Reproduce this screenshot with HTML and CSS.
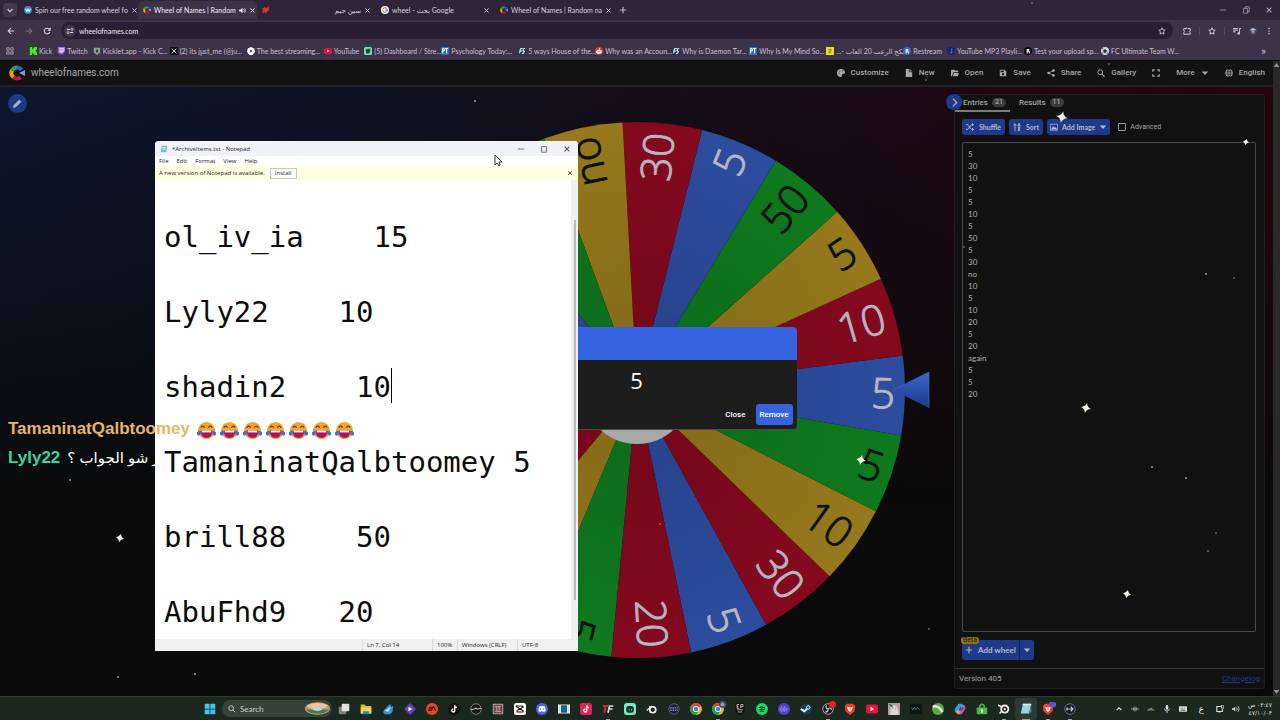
FILE: index.html
```
<!DOCTYPE html>
<html lang="en">
<head>
    <meta charset="UTF-8">
    <meta name="viewport" content="width=device-width, initial-scale=1.0">
    <title>Wheel of Names | Random name picker</title>
    <link rel="stylesheet" href="styles.css">
</head>
<body>
    <svg class="defs" aria-hidden="true">
        <symbol id="i-close" viewBox="0 0 10 10"><path d="M2 2l6 6M8 2l-6 6" stroke="currentColor" stroke-width="1.3" fill="none"/></symbol>
        <symbol id="i-wheel" viewBox="0 0 16 16">
            <path d="M8 2.5A5.5 5.5 0 0 0 3 5.5" stroke="#2fa043" stroke-width="4" fill="none"/>
            <path d="M3 5.5A5.5 5.5 0 0 0 4.500 12.300" stroke="#d9a91c" stroke-width="4" fill="none"/>
            <path d="M4.500 12.300A5.500 5.500 0 0 0 11.500 12.200" stroke="#c81536" stroke-width="4" fill="none"/>
            <path d="M8 2.500A5.500 5.500 0 0 1 12.500 5" stroke="#3560c8" stroke-width="4" fill="none"/>
            <path d="M10 8l6-3v6z" fill="#7d9ad8"/>
        </symbol>
        <symbol id="i-caret" viewBox="0 0 10 10"><path d="M1 3h8L5 7.500z" fill="currentColor"/></symbol>
        <symbol id="i-chrome" viewBox="0 0 16 16">
            <circle cx="8" cy="8" r="8" fill="#e0b82e"/>
            <path d="M8 8L1.100 4A8 8 0 0 1 14.900 4z" fill="#dc4437"/>
            <path d="M8 8L1.100 4A8 8 0 0 0 8 16l4-7z" fill="#229a52"/>
            <circle cx="8" cy="8" r="4" fill="#fff"/><circle cx="8" cy="8" r="3" fill="#3b7ded"/>
        </symbol>
        <symbol id="i-brave" viewBox="0 0 16 16">
            <path d="M4 1h8l3 3-1 7-6 5-6-5-1-7z" fill="#ef4023"/>
            <path d="M4 5l3 1h2l3-1-2 5-2 2-2-2z" fill="#fff"/><path d="M7 7h2l-1 3z" fill="#ef4023"/>
        </symbol>
        <symbol id="i-tiktok" viewBox="0 0 16 16"><path d="M9 3v7a2 2 0 1 1-2-2M9 3c0 2 1.500 3 3 3" stroke="#fff" stroke-width="1.800" fill="none"/></symbol>
        <symbol id="i-pt" viewBox="0 0 10 10"><rect width="10" height="10" fill="#2f6fc0"/><path d="M2 8V2h2v3H2M5 2h4M7 2v6" stroke="#fff" stroke-width="1.200" fill="none"/></symbol>
        <symbol id="i-fs" viewBox="0 0 10 10"><path d="M0 0h10v10H0z" fill="#25394f"/><path d="M2 8l1-6h3M2 5h3M9 2H7L6 5h2L7 8H5" stroke="#fff" stroke-width="1.200" fill="none"/></symbol>
        <symbol id="i-joy" viewBox="0 0 20 20">
            <circle cx="10" cy="10" r="9" fill="#f4a62c"/>
            <path d="M4 7q2-3 4 0M12 7q2-3 4 0" stroke="#5c3516" stroke-width="1.300" fill="none"/>
            <path d="M4 10h12q0 8-6 8t-6-8z" fill="#a81562"/><path d="M5 10h10v2H5z" fill="#fff"/>
            <path d="M4 10q-5 1-4 4t4 0zM16 10q5 1 4 4t-4 0z" fill="#4468d8"/>
        </symbol>
    </svg>

    <div class="browser">
        <div class="tab-strip">
            <button class="tab-search" aria-label="Search tabs"><svg viewBox="0 0 10 10"><path d="M2 4l3 3 3-3" stroke="currentColor" stroke-width="1.500" fill="none"/></svg></button>
            <div class="tab">
                <svg class="fav" viewBox="0 0 10 10"><circle cx="5" cy="5" r="5" fill="#3684d8"/><path d="M2 3.500l1.500 3.500L5 4l1.500 3L8 3.500" stroke="#fff" stroke-width="1.300" fill="none"/></svg>
                <span class="tab-title">Spin our free random wheel fo</span>
                <button class="tab-x" aria-label="Close tab"><svg><use href="#i-close"/></svg></button>
            </div>
            <div class="tab active">
                <svg class="fav"><use href="#i-wheel"/></svg>
                <span class="tab-title">Wheel of Names | Random</span>
                <svg class="sound" viewBox="0 0 10 10"><path d="M0 4h2l3-3v8L2 6H0z" fill="currentColor"/><path d="M6.500 3q2 2 0 4M8 1.500q3 3.500 0 7" stroke="currentColor" fill="none"/></svg>
                <button class="tab-x" aria-label="Close tab"><svg><use href="#i-close"/></svg></button>
            </div>
            <div class="tab">
                <svg class="fav" viewBox="0 0 10 10"><path d="M0 3l3-1 1-1 1 2 4-3-1 3 2-1-2 3 1 1-3 1-1 3-2-3-2 3V6L0 8l1-3z" fill="#cf3a2c"/></svg>
                <span class="tab-title" dir="rtl">سين جيم</span>
                <button class="tab-x" aria-label="Close tab"><svg><use href="#i-close"/></svg></button>
            </div>
            <div class="tab">
                <svg class="fav" viewBox="0 0 10 10"><circle cx="5" cy="5" r="5" fill="#fff"/><path d="M7 3A3 3 0 0 0 2.500 3.500" stroke="#e33" stroke-width="1.300" fill="none"/><path d="M2.500 3.500v3" stroke="#ea0" stroke-width="1.300"/><path d="M2.500 6.500A3 3 0 0 0 7 7" stroke="#2a4" stroke-width="1.300" fill="none"/><path d="M5 5h3L7 7" stroke="#47e" stroke-width="1.300" fill="none"/></svg>
                <span class="tab-title">wheel - بحث Google</span>
                <button class="tab-x" aria-label="Close tab"><svg><use href="#i-close"/></svg></button>
            </div>
            <div class="tab">
                <svg class="fav"><use href="#i-wheel"/></svg>
                <span class="tab-title">Wheel of Names | Random na</span>
                <button class="tab-x" aria-label="Close tab"><svg><use href="#i-close"/></svg></button>
            </div>
            <button class="new-tab" aria-label="New tab"><svg viewBox="0 0 10 10"><path d="M5 1v8M1 5h8" stroke="currentColor" stroke-width="1.400"/></svg></button>
            <div class="win-buttons">
                <button aria-label="Minimize"><svg viewBox="0 0 10 10"><path d="M1 5h8" stroke="currentColor"/></svg></button>
                <button aria-label="Restore"><svg viewBox="0 0 10 10"><path d="M2 3h5v6H2zM4 3V1h5v6H7" stroke="currentColor" fill="none"/></svg></button>
                <button aria-label="Close"><svg><use href="#i-close"/></svg></button>
            </div>
        </div>

        <div class="toolbar">
            <button aria-label="Back"><svg viewBox="0 0 10 10"><path d="M9 5H1.500M5 1.500L1.500 5 5 8.500" stroke="currentColor" stroke-width="1.300" fill="none"/></svg></button>
            <button class="off" aria-label="Forward"><svg viewBox="0 0 10 10"><path d="M1 5h7.500M5 1.500L8.500 5 5 8.500" stroke="currentColor" stroke-width="1.300" fill="none"/></svg></button>
            <button aria-label="Reload"><svg viewBox="0 0 10 10"><path d="M8.500 6A3.500 3.500 0 1 1 7.500 2.500L9 4M9 1v3H6" stroke="currentColor" stroke-width="1.300" fill="none"/></svg></button>
            <div class="address">
                <span class="site-info"><svg viewBox="0 0 10 10"><path d="M1 3h4M5 7h4" stroke="currentColor" stroke-width="1.300"/><circle cx="7.500" cy="3" r="1.300" stroke="currentColor" fill="none"/><circle cx="2.500" cy="7" r="1.300" stroke="currentColor" fill="none"/></svg></span>
                <input type="text" value="wheelofnames.com" aria-label="Address">
                <svg viewBox="0 0 10 10"><path d="M5 1l1.200 2.700 2.800.3-2.100 2 .6 3L5 7.500 2.500 9l.6-3L1 4l2.800-.3z" stroke="currentColor" fill="none"/></svg>
            </div>
            <div class="ext">
                <svg viewBox="0 0 10 10"><path d="M1 2h3q1-2 2 0h3v3q-2 1 0 2v2H1V7q2-1 0-2z" stroke="currentColor" stroke-width="1.200" fill="none"/></svg>
                <i></i>
                <svg viewBox="0 0 10 10"><path d="M5 1l1.200 2.700 2.800.3-2.100 2 .6 3L5 7.500 2.500 9l.6-3L1 4l2.800-.3z" stroke="currentColor" stroke-width="1.200" fill="none"/></svg>
                <i></i>
                <svg viewBox="0 0 10 10"><path d="M0 2h6M0 4h6M0 6h3M8 8V2h2" stroke="currentColor" stroke-width="1.200" fill="none"/><circle cx="7" cy="8" r="1.500" fill="currentColor"/></svg>
                <svg viewBox="0 0 10 10"><circle cx="5" cy="5" r="5" fill="#36466d"/><path d="M1 4q4-5 8 0z" fill="#c7c2cf"/><circle cx="5" cy="5.500" r="2" fill="#c09080"/><path d="M2 9q3-3 6 0z" fill="#ab3540"/></svg>
                <svg viewBox="0 0 10 10"><path d="M5 1v1.500M5 4.300v1.500M5 7.500V9" stroke="currentColor" stroke-width="1.500"/></svg>
            </div>
        </div>

        <div class="bookmarks">
            <svg class="apps" viewBox="0 0 10 10"><path d="M1 1h3v3H1zM6 1h3v3H6zM1 6h3v3H1zM6 6h3v3H6z" stroke="currentColor" stroke-width="1.200" fill="none"/></svg>
            <a href="#"><svg viewBox="0 0 10 10"><path d="M1 0h3v3l3-3h3v3L8 5l2 2v3H7L4 7v3H1z" fill="#3ff01d"/></svg><span>Kick</span></a>
            <a href="#"><svg viewBox="0 0 10 10"><path d="M1 0h9v6L7 9H5L4 10V8H1z" fill="#9b5ce8"/><path d="M3 1h6v4L7 7H3z" fill="#e9dcf8"/><path d="M5 2v3M7.500 2v3" stroke="#9b5ce8"/></svg><span>Twitch</span></a>
            <a href="#" class="wide"><svg viewBox="0 0 10 10"><path d="M1 1h8v6L5 10 1 7z" fill="#8da093"/><path d="M4 3h2v4H4z" fill="#222"/></svg><span>Kicklet.app - Kick C...</span></a>
            <a href="#" class="wide"><svg viewBox="0 0 10 10"><path d="M0 0h10v10H0z" fill="#111"/><path d="M2 2l6 6M8 2L2 8" stroke="#ddd" stroke-width="1.200"/></svg><span>(2) its just_me (@ju...</span></a>
            <a href="#" class="wide"><svg viewBox="0 0 10 10"><path d="M5 0l4 2 1 4-3 4H3L0 6l1-4z" fill="#fff"/><path d="M4 3l3 2-3 2z" fill="#333"/></svg><span>The best streaming...</span></a>
            <a href="#"><svg viewBox="0 0 10 10"><rect y="1" width="10" height="8" rx="2" fill="#e01237"/><path d="M4 3l3 2-3 2z" fill="#fff"/></svg><span>YouTube</span></a>
            <a href="#" class="wide"><svg viewBox="0 0 10 10"><rect width="10" height="10" rx="2" fill="#6de0b6"/><path d="M2 3l6-1v3L6 8H3z" fill="#154438"/></svg><span>(5) Dashboard / Stre...</span></a>
            <a href="#" class="wide"><svg><use href="#i-pt"/></svg><span>Psychology Today:...</span></a>
            <a href="#" class="wide"><svg><use href="#i-fs"/></svg><span>5 ways House of the...</span></a>
            <a href="#" class="wide"><svg viewBox="0 0 10 10"><circle cx="5" cy="5" r="5" fill="#d93a28"/><ellipse cx="5" cy="6" rx="3.500" ry="2.500" fill="#fff"/><path d="M5 4l1-3" stroke="#fff"/><circle cx="3.800" cy="5.500" r=".7" fill="#d93a28"/><circle cx="6.200" cy="5.500" r=".7" fill="#d93a28"/></svg><span>Why was an Accoun...</span></a>
            <a href="#" class="wide"><svg><use href="#i-fs"/></svg><span>Why is Daemon Tar...</span></a>
            <a href="#" class="wide"><svg><use href="#i-pt"/></svg><span>Why Is My Mind So...</span></a>
            <a href="#" class="wide"><svg viewBox="0 0 10 10"><path d="M0 0h10v10H0z" fill="#e8e020"/><path d="M3 3h4M3 5h4M3 7h3" stroke="#6a6515"/></svg><span dir="rtl">بكج الرعب 20 العاب -...</span></a>
            <a href="#"><svg viewBox="0 0 10 10"><circle cx="5" cy="5" r="5" fill="#2e6be0"/><path d="M4 8V3h2v2H4M6 5l1 3" stroke="#fff" stroke-width="1.300" fill="none"/></svg><span>Restream</span></a>
            <a href="#" class="wide"><svg viewBox="0 0 10 10"><circle cx="5" cy="5" r="5" fill="#221d75"/><path d="M6 2v5q-1 1-2 0" stroke="#6b6be8" stroke-width="1.300" fill="none"/></svg><span>YouTube MP3 Playli...</span></a>
            <a href="#" class="wide"><svg viewBox="0 0 10 10"><circle cx="5" cy="5" r="5" fill="#0c0c0f"/><path d="M4 8V3h2v2H4M6 5l1 3" stroke="#fff" stroke-width="1.300" fill="none"/></svg><span>Test your upload sp...</span></a>
            <a href="#" class="wide"><svg viewBox="0 0 10 10"><circle cx="5" cy="5" r="5" fill="#d9d6de"/><path d="M5 3l2 1.500L6 7H4L3 4.500zM1 2l2 .5M9 7L7 8M1 7l2 1" fill="#333" stroke="#333"/></svg><span>FC Ultimate Team W...</span></a>
            <span class="more-marks">»</span>
        </div>
    </div>

    <div class="viewport">
        <div class="page">
            <header class="site-header">
                <a href="#" class="brand"><svg><use href="#i-wheel"/></svg>wheelofnames.com</a>
                <nav>
                    <button><svg viewBox="0 0 10 10"><path d="M5 0a5 5 0 0 0 0 10q1.500 0 1-2t2-2q2 0 2-1.500Q9.500 0 5 0z" fill="currentColor"/><path d="M2 5h1M3 2.500h1M6 2.500h1" stroke="#121212" stroke-width="1.300"/></svg>Customize</button>
                    <button><svg viewBox="0 0 10 10"><path d="M1 0h5l3 3v7H1z" fill="currentColor"/><path d="M5.500 0v3.500H9" stroke="#121212" fill="none"/></svg>New</button>
                    <button><svg viewBox="0 0 10 10"><path d="M0 9V1h4l1 1h4v2H3L1 9zM3.500 5H10L8.500 9H2z" fill="currentColor"/></svg>Open</button>
                    <button><svg viewBox="0 0 10 10"><path d="M1 1h6l2 2v6H1z" fill="currentColor"/><path d="M2 2h4v2H2z" fill="#121212"/><circle cx="5" cy="6.500" r="1.400" fill="#121212"/></svg>Save</button>
                    <button><svg viewBox="0 0 10 10"><path d="M8 2L2 5l6 3" stroke="currentColor" fill="none"/><circle cx="8" cy="2" r="1.700" fill="currentColor"/><circle cx="2" cy="5" r="1.700" fill="currentColor"/><circle cx="8" cy="8" r="1.700" fill="currentColor"/></svg>Share</button>
                    <button><svg viewBox="0 0 10 10"><circle cx="4" cy="4" r="3" stroke="currentColor" stroke-width="1.200" fill="none"/><path d="M6 6l3.500 3.500" stroke="currentColor" stroke-width="1.400"/></svg>Gallery</button>
                    <button aria-label="Fullscreen"><svg viewBox="0 0 10 10"><path d="M1 3.500V1h2.500M6.500 1H9v2.500M9 6.500V9H6.500M3.500 9H1V6.500" stroke="currentColor" stroke-width="1.500" fill="none"/></svg></button>
                    <button>More<svg><use href="#i-caret"/></svg></button>
                    <button><svg viewBox="0 0 10 10"><circle cx="5" cy="5" r="4.800" fill="currentColor"/><path d="M0 3.500h10M0 6.500h10M5 0v10" stroke="#121212" stroke-width=".7"/><ellipse cx="5" cy="5" rx="2.200" ry="4.800" stroke="#121212" stroke-width=".7" fill="none"/></svg>English</button>
                </nav>
            </header>

            <main class="stage">
                <div class="tools">
                    <button class="round" aria-label="Edit title"><svg viewBox="0 0 10 10"><path d="M1 9l.5-2.500L6.500 1.500l2 2-5 5z" fill="currentColor"/></svg></button>
                </div>
                <div class="wheel">
                    <svg id="wheel" viewBox="-268 -268 536 536">
                        <defs>
                            <radialGradient id="shade"><stop offset=".3" stop-opacity=".1"/><stop offset="1" stop-opacity="0"/></radialGradient>
                            <linearGradient id="ptr" x2="0" y2="1"><stop stop-color="#3a68cc"/><stop offset="1" stop-color="#1b3a86"/></linearGradient>
                        </defs>
                        <g id="slices"></g>
                        <circle r="268" fill="url(#shade)"/>
                        <circle r="54" fill="#a8a8a8"/>
                        <path d="M256 0L292-18V18z" fill="url(#ptr)"/>
                        <path d="M256 0L292-18V18" stroke="#4b6cb8" stroke-width="1" fill="none" opacity=".6"/>
                    </svg>
                </div>

                <aside class="panel">
                    <div class="panel-tabs">
                        <button class="round toggle" aria-label="Hide panel"><svg viewBox="0 0 10 10"><path d="M3.500 1.500L7 5 3.500 8.500" stroke="currentColor" stroke-width="1.200" fill="none"/></svg></button>
                        <button class="on">Entries <span class="badge">21</span></button>
                        <button>Results <span class="badge">11</span></button>
                    </div>
                    <div class="panel-tools">
                        <button class="blue"><svg viewBox="0 0 10 10"><path d="M0 2h2l5 6h2M0 8h2l5-6h2M7.500.5L9.500 2 7.500 3.500M7.500 6.500L9.500 8l-2 1.500" stroke="currentColor" stroke-width="1.200" fill="none"/></svg>Shuffle</button>
                        <button class="blue"><svg viewBox="0 0 10 10"><path d="M2.500 10V1M.5 3l2-2 2 2M7.500 0v9M6 4l1.500-3L9 4M6 6h3L6 9h3" stroke="currentColor" stroke-width="1.200" fill="none"/></svg>Sort</button>
                        <button class="blue image"><svg viewBox="0 0 10 10"><path d="M.5 1.500h9v7.500h-9z" stroke="currentColor" fill="none"/><path d="M1 8l3-4 2 2 1-1 2 3z" fill="currentColor"/></svg>Add Image<svg><use href="#i-caret"/></svg></button>
                        <label><input type="checkbox" id="advanced">Advanced</label>
                    </div>
                    <textarea class="entries" id="entries" aria-label="Entries" spellcheck="false">5
30
10
5
5
10
5
50
5
30
no
10
5
10
20
5
20
again
5
5
20</textarea>
                    <div class="panel-add">
                        <button class="blue"><svg viewBox="0 0 10 10"><path d="M5 1v8M1 5h8" stroke="currentColor" stroke-width="1.300"/></svg>Add wheel</button><button class="blue split" aria-label="More wheel options"><svg><use href="#i-caret"/></svg></button>
                        <span class="beta">Beta</span>
                    </div>
                    <div class="panel-foot"><span>Version 405</span><a href="#">Changelog</a></div>
                </aside>

                <div class="dialog" role="dialog" aria-label="Winner">
                    <div class="dialog-bar"></div>
                    <div class="dialog-text">5</div>
                    <div class="dialog-buttons"><button>Close</button><button class="remove">Remove</button></div>
                </div>
            </main>
        </div>
        <div class="scrollbar"><svg viewBox="0 0 10 10"><path d="M1 8h8L5 2z" fill="currentColor"/></svg><svg viewBox="0 0 10 10"><path d="M1 2h8L5 8z" fill="currentColor"/></svg></div>
    </div>

    <footer class="taskbar">
        <div class="apps-row">
            <button aria-label="Start"><svg viewBox="0 0 16 16"><path d="M1 1h6.500v6.500H1zM8.500 1H15v6.500H8.500zM1 8.500h6.500V15H1zM8.500 8.500H15V15H8.500z" fill="#45c1f0"/></svg></button>
            <label class="search">
                <svg viewBox="0 0 10 10"><circle cx="4" cy="4" r="3" stroke="currentColor" fill="none"/><path d="M6 6l3 3" stroke="currentColor"/></svg>
                <input type="text" placeholder="Search" aria-label="Search">
                <svg class="art" viewBox="0 0 24 12"><ellipse cx="12" cy="6" rx="12" ry="6" fill="#bd9f74"/><path d="M2 3q10-5 20 0L18 6H5z" fill="#efc29c"/><path d="M1 7h22q-3 4-11 4T1 7z" fill="#437a5c"/><path d="M6 6q6-2 11 1-6 3-11-1z" fill="#c3d8c8"/></svg>
            </label>
            <button aria-label="Task view"><svg viewBox="0 0 16 16"><rect x="1" y="5" width="10" height="10" rx="1" fill="#7b807c"/><rect x="5" y="1" width="10" height="10" rx="1" fill="#dfe3e0"/></svg></button>
            <button aria-label="File Explorer"><svg viewBox="0 0 16 16"><path d="M1 2h5l2 2h7v10H1z" fill="#e5b62f"/><path d="M1 6h14v8H1z" fill="#f8d35a"/><path d="M4 11h8v4H4z" fill="#2d80c8"/></svg></button>
            <button aria-label="Bird"><svg viewBox="0 0 16 16"><path d="M3 9L11 1l1 4 3-1-1 8-3 3H4q-4-2-1-6z" fill="#3692e5"/><path d="M4 10l8-5-4 7z" fill="#cfe8fc"/></svg></button>
            <button aria-label="Player"><svg viewBox="0 0 16 16"><path d="M8 0l8 8-8 8-8-8z" fill="#6442b8"/><path d="M6 5l5 3-5 3z" fill="#fff"/></svg></button>
            <button aria-label="EA"><svg viewBox="0 0 16 16"><circle cx="8" cy="8" r="8" fill="#e2481b"/><path d="M4 6h5M3 8h5M3 10h4l3-5 3 5" stroke="#26120b" stroke-width="1.500" fill="none"/></svg></button>
            <button aria-label="TikTok Live"><svg viewBox="0 0 16 16"><circle cx="8" cy="8" r="8" fill="#0c0c0c"/></svg><svg class="over"><use href="#i-tiktok"/></svg></button>
            <button aria-label="Mixer"><svg viewBox="0 0 16 16"><circle cx="8" cy="8" r="7" fill="#171b19" stroke="#969b98"/><path d="M1 9l5-1 2-1 2 1 5-1" stroke="#b9bebb" stroke-width="1.500" fill="none"/></svg></button>
            <button aria-label="Rockstar"><svg viewBox="0 0 16 16"><rect x="1" y="1" width="14" height="14" fill="#b29c9b"/><path d="M3 3h10v10H3zM5 5v6M8 5v6M11 5v6" stroke="#5c3234" stroke-width="1.300" fill="none"/></svg></button>
            <button aria-label="CapCut"><svg viewBox="0 0 16 16"><rect width="16" height="16" rx="3" fill="#fff"/><path d="M13 5L4 10v2h8v-2L3 5V4h8v2" stroke="#111" stroke-width="1.400" fill="none"/></svg></button>
            <button aria-label="Discord"><svg viewBox="0 0 16 16"><circle cx="8" cy="8" r="8" fill="#5563dc"/><path d="M4 5q4-2 8 0l1 6-3 1-1-1H7l-1 1-3-1z" fill="#fff"/><circle cx="6" cy="8" r="1" fill="#5563dc"/><circle cx="10" cy="8" r="1" fill="#5563dc"/></svg></button>
            <button aria-label="Media"><svg viewBox="0 0 16 16"><path d="M0 2h16v12H0z" fill="#e2edf2"/><path d="M4 3h8v10H4z" fill="#19639c"/><path d="M1 4h2M1 7h2M1 10h2M13 4h2M13 7h2M13 10h2" stroke="#9bb"/></svg></button>
            <button aria-label="TikTok Studio"><svg viewBox="0 0 16 16"><rect width="16" height="16" rx="3" fill="#e61f57"/></svg><svg class="over"><use href="#i-tiktok"/></svg></button>
            <button class="run" aria-label="TF"><svg viewBox="0 0 16 16"><path d="M1 4h7M5 4L3 13" stroke="#d2264b" stroke-width="2.500"/><path d="M15 4h-5L8 13M9 8h5" stroke="#d9d9d9" stroke-width="2.300" fill="none"/></svg></button>
            <button aria-label="Streamlabs"><svg viewBox="0 0 16 16"><rect width="16" height="16" rx="4" fill="#7fe7c4"/><rect x="3" y="4" width="10" height="9" rx="3" fill="#11352c"/><path d="M7 8v2M10 8v2" stroke="#7fe7c4"/></svg></button>
            <button aria-label="Blender"><svg viewBox="0 0 16 16"><circle cx="9" cy="9" r="4" stroke="#eee" stroke-width="2.300" fill="none"/><path d="M1 10l7-6M4 5h7" stroke="#eee" stroke-width="1.500"/></svg></button>
            <button aria-label="Sampler"><svg viewBox="0 0 16 16"><circle cx="8" cy="8" r="7" fill="#162032" stroke="#66718b"/><path d="M3 6h10M3 8h10M3 10h10" stroke="#9fa9d4" stroke-dasharray="2 1"/></svg></button>
            <button aria-label="Chrome"><svg><use href="#i-chrome"/></svg></button>
            <button class="run" aria-label="Chrome profile"><svg><use href="#i-chrome"/></svg><svg class="mini" viewBox="0 0 8 8"><circle cx="4" cy="4" r="4" fill="#455374"/><circle cx="4" cy="4" r="2" fill="#c59585"/></svg></button>
            <button aria-label="Epic Games"><svg viewBox="0 0 16 16"><path d="M2 0h12v13l-6 3-6-3z" fill="#101010"/><path d="M7 2H4v5h3M4 4.500h2M9 7V2h3v3H9M4 9h8M5 12h6" stroke="#ddd" fill="none"/></svg></button>
            <button aria-label="Spotify"><svg viewBox="0 0 16 16"><circle cx="8" cy="8" r="8" fill="#1ed760"/><path d="M4 6q4-1.500 8 .5M4.500 8.500q4-1 7 .5M5 11q3-1 5.500.5" stroke="#111" stroke-width="1.300" fill="none"/></svg></button>
            <button aria-label="Voicemod"><svg viewBox="0 0 16 16"><circle cx="8" cy="8" r="8" fill="#4f3fd0"/><path d="M3 6v4M5 4v8M7 6v5M9 4v8M11 6v5M13 7v2" stroke="#a99ef5"/></svg></button>
            <button aria-label="Steam"><svg viewBox="0 0 16 16"><circle cx="8" cy="8" r="7.500" fill="#123f68"/><circle cx="11" cy="6" r="2.300" stroke="#fff" stroke-width="1.300" fill="none"/><path d="M1 8l5 3 3-3" stroke="#fff" stroke-width="2.500" fill="none"/></svg></button>
            <button class="run" aria-label="OBS"><svg viewBox="0 0 16 16"><circle cx="8" cy="8" r="7" fill="#191b1c" stroke="#c9c9c9"/><path d="M8 8q-4-1-2-5M8 8q3-3 5 1M8 8q1 4-4 4" stroke="#c9c9c9" stroke-width="1.500" fill="none"/></svg><svg class="mini" viewBox="0 0 8 8"><circle cx="4" cy="4" r="4" fill="#e12134"/></svg></button>
            <button aria-label="Brave"><svg><use href="#i-brave"/></svg></button>
            <button aria-label="YouTube"><svg viewBox="0 0 16 16"><rect y="2" width="16" height="12" rx="3" fill="#ef1238"/><path d="M6 5l5 3-5 3z" fill="#fff"/></svg></button>
            <button aria-label="Portrait"><svg viewBox="0 0 16 16"><path d="M0 0h16v16H0z" fill="#aaa19f"/><path d="M3 16q-1-12 5-13t6 13z" fill="#ddd6d4"/><path d="M6 7h1M10 7h1M2 2l4 3" stroke="#444" stroke-width="1.500"/></svg></button>
            <button aria-label="WeMod"><svg viewBox="0 0 16 16"><path d="M0 1h16v14H0z" fill="#0c1716"/><path d="M2 6l2 3 2-3 2 3 2-3 3 3" stroke="#4a9c8e" fill="none"/></svg></button>
            <button aria-label="Xbox"><svg viewBox="0 0 16 16"><circle cx="8" cy="8" r="8" fill="#62a548"/><path d="M1 5q7-3 13 7" stroke="#e2f0dc" stroke-width="3" fill="none"/></svg></button>
            <button aria-label="Copilot"><svg viewBox="0 0 16 16"><path d="M6 1h5l2 5h-5L5 14q-5-1-4-6z" fill="#37a0e5"/><path d="M10 15H5l-2-5h5l3-8q5 1 4 6z" fill="#d65bb0"/><path d="M3 10h5l-1 5H5z" fill="#edae34"/><path d="M8 6h5l-2 4H7z" fill="#3157b5"/></svg></button>
            <button aria-label="Vault"><svg viewBox="0 0 16 16"><path d="M5 7V4q3-5 6 0v3" stroke="#43bb3c" stroke-width="2" fill="none"/><rect x="1" y="6" width="14" height="9" rx="1" fill="#43bb3c"/><path d="M8 8v5" stroke="#fff" stroke-width="2"/></svg></button>
            <button class="run" aria-label="Capture"><svg viewBox="0 0 16 16"><circle cx="9" cy="8" r="6" fill="#eee"/><circle cx="9" cy="8" r="3.500" fill="#222"/><circle cx="9" cy="8" r="1.500" fill="#eee"/><path d="M0 3l5 2M2 14l3-3" stroke="#eee" stroke-width="2"/></svg></button>
            <button class="run current" aria-label="Notepad"><svg viewBox="0 0 16 16"><path d="M4 1h11l-3 13H1z" fill="#9bd3e0"/><path d="M4 1h11v2H3z" fill="#d8eef2"/><path d="M12 14l3-13v11z" fill="#4f8c9e"/></svg></button>
            <button class="run" aria-label="Brave window"><svg><use href="#i-brave"/></svg><svg class="mini" viewBox="0 0 8 8"><rect y="1" width="8" height="6" rx="2" fill="#6a4dd8"/></svg></button>
            <button class="run" aria-label="Remote"><svg viewBox="0 0 16 16"><circle cx="8" cy="8" r="7" fill="#15191e" stroke="#8088a5"/><path d="M3 8h9M9 5l3 3-3 3M4 6v4" stroke="#c5cce8" stroke-width="1.500" fill="none"/></svg></button>
        </div>
        <div class="tray">
            <svg viewBox="0 0 10 10"><path d="M2 6.500l3-3 3 3" stroke="currentColor" stroke-width="1.400" fill="none"/></svg>
            <svg viewBox="0 0 10 10"><path d="M0 5h10M3 3v4M5 2v6M7 3v4" stroke="#9a9f9b" stroke-width="1.300"/></svg>
            <svg viewBox="0 0 10 10"><path d="M0 7q1-3 3-2 2-3 4 0 3 0 3 2z" fill="#777d79"/></svg>
            <svg viewBox="0 0 10 10"><rect x="3.500" y="0" width="3" height="6" rx="1.500" fill="#d5e4ef"/><path d="M2 4.500q0 3 3 3t3-3M5 7.500V10" stroke="#d5e4ef" fill="none"/></svg>
            <svg viewBox="0 0 10 10"><rect y="1.500" width="10" height="7" rx="1" fill="currentColor"/><path d="M2 4h1M4 4h1M6 4h1M2 6.500h6" stroke="#1b2820"/></svg>
            <span class="lang">ع</span>
            <svg viewBox="0 0 10 10"><path d="M7 2H1v6h7V5" stroke="currentColor" stroke-width="1.300" fill="none"/><path d="M7 0h3v4H7zM3 10h3" stroke="currentColor" fill="none"/></svg>
            <svg viewBox="0 0 10 10"><path d="M0 4h2l2-2v6L2 6H0z" fill="currentColor"/><path d="M5.500 3q2 2 0 4M7.500 1.500q3 3.500 0 7" stroke="currentColor" fill="none"/></svg>
            <div class="clock" dir="rtl"><span>٠٣:٤٧ ص</span><span>٤٧/١٠/٠٣</span></div>
        </div>
    </footer>

    <section class="notepad">
        <div class="np-title">
            <svg viewBox="0 0 10 10"><path d="M2 1h7L8 9H1z" fill="#79bccb"/><path d="M3 3h4M3 5h4" stroke="#fff"/></svg>
            <span>*ArchiveItems.txt - Notepad</span>
            <button aria-label="Minimize"><svg viewBox="0 0 10 10"><path d="M1 5h8" stroke="currentColor"/></svg></button>
            <button aria-label="Maximize"><svg viewBox="0 0 10 10"><path d="M2 2h6v7H2z" stroke="currentColor" fill="none"/></svg></button>
            <button aria-label="Close"><svg><use href="#i-close"/></svg></button>
        </div>
        <div class="np-menu"><button>File</button><button>Edit</button><button>Format</button><button>View</button><button>Help</button></div>
        <div class="np-notice">
            <span>A new version of Notepad is available.</span><button class="install">Install</button>
            <button class="dismiss" aria-label="Dismiss"><svg><use href="#i-close"/></svg></button>
        </div>
        <div class="np-body">
            <textarea aria-label="Text" spellcheck="false">ol_iv_ia    15
Lyly22    10
shadin2    10
TamaninatQalbtoomey 5
brill88    50
AbuFhd9   20</textarea>
            <i class="caret"></i>
            <div class="np-scroll"><i></i></div>
        </div>
        <div class="np-status"><span class="pos">Ln 7, Col 14</span><span class="zoom">100%</span><span class="eol">Windows (CRLF)</span><span class="enc">UTF-8</span></div>
    </section>

    <div class="chat">
        <p><b class="gold">TamaninatQalbtoomey</b><svg><use href="#i-joy"/></svg><svg><use href="#i-joy"/></svg><svg><use href="#i-joy"/></svg><svg><use href="#i-joy"/></svg><svg><use href="#i-joy"/></svg><svg><use href="#i-joy"/></svg><svg><use href="#i-joy"/></svg></p>
        <p><b class="mint">Lyly22</b><span dir="rtl">رر شو الجواب ؟</span></p>
    </div>

    <svg class="sparkles" id="sparkles" viewBox="0 0 1280 720" aria-hidden="true">
        <path d="M495 155v10l2-2 2 3 1-1-1-3h3z" fill="#fff" stroke="#333"/>
    </svg>

    <script>
        const SVG = 'http://www.w3.org/2000/svg';
        const colors = ['#2c4c9e', '#84091f', '#96791c', '#0e7a1e'];
        const entries = document.getElementById('entries').value.split('\n');
        const step = 360 / entries.length;
        const radius = 268;

        function add(parent, name, attrs) {
            const el = document.createElementNS(SVG, name);
            for (const key in attrs) el.setAttribute(key, attrs[key]);
            parent.appendChild(el);
            return el;
        }

        function point(deg) {
            const a = deg * Math.PI / 180;
            return (radius * Math.cos(a)).toFixed(2) + ' ' + (radius * Math.sin(a)).toFixed(2);
        }

        // the winner (index 4) rests at the pointer
        const slices = document.getElementById('slices');
        entries.forEach((entry, i) => {
            const mid = (4 - i) * step + 1.2;
            let c = i % 4;
            if (i === entries.length - 1 && c === 0) c = 1;
            add(slices, 'path', {
                d: `M0 0L${point(mid - step / 2)}A${radius} ${radius} 0 0 1 ${point(mid + step / 2)}z`,
                fill: colors[c]
            });
            const text = add(slices, 'text', {
                x: 258, y: 13, transform: `rotate(${mid})`,
                class: c < 2 ? 'light' : 'dark'
            });
            text.textContent = entry;
        });

        const stars = [[1062, 117, 6], [1246, 142, 3], [1086, 408, 5], [861, 460, 5], [120, 538, 4], [1127, 594, 4]];
        const dots = [[475, 101], [1206, 274], [70, 480], [118, 677], [195, 674], [1152, 467], [1186, 478], [1216, 533],
            [929, 629], [1109, 64], [201, 55], [660, 524], [964, 247], [1234, 278], [1032, 3], [926, 80], [435, 457], [1208, 551]];
        const sky = document.getElementById('sparkles');
        stars.forEach(([x, y, r]) => add(sky, 'path', {
            d: `M0-${r}Q1-1 ${r} 0Q1 1 0 ${r}Q-1 1-${r} 0Q-1-1 0-${r}z`,
            transform: `translate(${x} ${y}) rotate(12)`, fill: '#f2efe2'
        }));
        dots.forEach(([x, y], i) => add(sky, 'circle', { cx: x, cy: y, r: 1, fill: '#ddd', opacity: i < 7 ? 0.7 : 0.4 }));
    </script>
</body>
</html>
```
FILE: styles.css
```
* {
    box-sizing: border-box;
}
body {
    margin: 0;
    height: 100vh;
    display: flex;
    flex-direction: column;
    position: relative;
    overflow: hidden;
    background: #0a0a0a;
    font-family: Roboto, "Noto Sans", "DejaVu Sans", sans-serif;
    font-size: 8px;
    line-height: 12px;
}
button, input, textarea {
    font: inherit;
    color: inherit;
    border: 0;
    padding: 0;
    margin: 0;
    background: none;
    outline: none;
}
button {
    display: flex;
    align-items: center;
    justify-content: center;
    cursor: pointer;
    white-space: nowrap;
}
a {
    color: inherit;
    text-decoration: none;
}
svg {
    width: 8px;
    height: 8px;
    flex: none;
    display: block;
}
.defs {
    position: absolute;
    width: 0;
    height: 0;
}

/* browser */
.browser {
    background: #3d3349;
    color: #d8d3de;
    font-family: Lato, "DejaVu Sans", sans-serif;
    font-size: 7px;
    flex: none;
}
.tab-strip {
    display: flex;
    align-items: center;
    height: 20px;
    padding-left: 3px;
    background: #2e2538;
}
.tab-search {
    width: 14px;
    height: 14px;
    border-radius: 4px;
    background: #43394d;
    margin-right: 2px;
}
.tab {
    display: flex;
    align-items: center;
    width: 119px;
    height: 18px;
    padding: 0 5px;
    gap: 3px;
}
.tab.active {
    background: #3d3349;
    border-radius: 5px 5px 0 0;
    color: #f1edf5;
}
.tab-title {
    flex: 1;
    white-space: nowrap;
}
.tab-x svg {
    width: 7px;
    height: 7px;
}
.sound {
    width: 7px;
    height: 7px;
}
.new-tab {
    width: 18px;
    color: #b9b3c0;
}
.win-buttons {
    display: flex;
    gap: 15px;
    margin-left: auto;
    margin-right: 7px;
    color: #a79fb0;
}
.toolbar {
    display: flex;
    align-items: center;
    height: 21px;
    padding: 0 7px;
    gap: 10px;
}
.toolbar .off {
    color: #786e84;
}
.address {
    flex: 1;
    display: flex;
    align-items: center;
    height: 17px;
    gap: 3px;
    padding: 0 7px 0 3px;
    border-radius: 9px;
    background: #281f34;
}
.address input {
    flex: 1;
    color: #eeeaf2;
}
.site-info {
    width: 12px;
    height: 12px;
    padding: 2px;
    border-radius: 6px;
    background: #41374c;
}
.ext {
    display: flex;
    align-items: center;
    gap: 8px;
}
.ext i {
    width: 1px;
    height: 8px;
    background: #554a62;
}
.bookmarks {
    display: flex;
    align-items: center;
    height: 19px;
    padding: 0 14px 0 6px;
    color: #c7c1ce;
}
.apps {
    margin-right: 15px;
    color: #a198ac;
}
.bookmarks a {
    display: flex;
    align-items: center;
    flex: none;
    gap: 2px;
    padding-right: 5px;
    white-space: nowrap;
}
.bookmarks a.wide {
    width: 77px;
    padding-right: 0;
}
.more-marks {
    margin-left: auto;
    font-size: 11px;
}

/* page */
.viewport {
    flex: 1;
    display: flex;
    margin-top: 1px;
    min-height: 0;
}
.page {
    flex: 1;
    display: flex;
    flex-direction: column;
    min-width: 0;
}
.scrollbar {
    width: 7px;
    display: flex;
    flex-direction: column;
    justify-content: space-between;
    background: #292929;
    color: #929292;
}
.scrollbar svg {
    width: 7px;
}
.site-header {
    display: flex;
    align-items: center;
    justify-content: space-between;
    height: 26px;
    padding: 0 8px 0 9px;
    background: #121212;
    border-bottom: 2px solid #232024;
    color: #a8a8a8;
}
.brand {
    display: flex;
    align-items: center;
    gap: 6px;
    font-size: 10px;
}
.brand svg {
    width: 16px;
    height: 16px;
}
nav {
    display: flex;
    gap: 16px;
    font-weight: 500;
}
nav button {
    gap: 6px;
}
.stage {
    flex: 1;
    position: relative;
    display: grid;
    grid-template-columns: 1fr 536px 1fr;
    min-height: 0;
    background:
        linear-gradient(rgba(10, 10, 10, 0) 0, #0a0a0a 420px),
        linear-gradient(90deg, #0c1730, #130d18 50%, #26040d);
}
.tools {
    padding: 7px 8px;
}
.round {
    width: 19px;
    height: 19px;
    border-radius: 50%;
    background: #1f3a86;
    color: #a9b2c8;
}
.round svg {
    width: 11px;
    height: 11px;
}
.wheel {
    align-self: center;
    padding-bottom: 3px;
}
.wheel svg {
    width: 100%;
    height: auto;
    overflow: visible;
}
.wheel text {
    font-family: "Open Sans", sans-serif;
    font-size: 42px;
    font-weight: 300;
    text-anchor: end;
    stroke-width: 1px;
}
.wheel .light {
    fill: #b9b9c0;
    stroke: #b9b9c0;
}
.wheel .dark {
    fill: #0d100a;
    stroke: #0d100a;
}

/* side panel */
.panel {
    justify-self: end;
    display: flex;
    flex-direction: column;
    width: 311px;
    margin: 7px 8px;
    background: #111;
    border: 1px solid #1f1f1f;
    border-radius: 3px;
    color: #a3a3a3;
}
.panel-tabs {
    position: relative;
    display: flex;
    height: 17px;
    font-weight: 500;
}
.panel-tabs button:not(.round) {
    gap: 4px;
    padding: 0 4px 0 8px;
    margin-right: 1px;
    border-bottom: 2px solid transparent;
}
.panel-tabs button.on:not(.round) {
    border-color: #7c7c7c;
}
.panel-tabs .toggle {
    position: absolute;
    left: -9px;
    top: -1px;
    width: 16px;
    height: 16px;
}
.badge {
    padding: 0 3px;
    border-radius: 5px;
    background: #3c3c3c;
    font-size: 7px;
    line-height: 9px;
}
.panel-tools {
    display: flex;
    align-items: center;
    gap: 4px;
    padding: 7px;
}
.blue {
    height: 16px;
    gap: 5px;
    padding: 0 4px;
    border-radius: 3px;
    background: #20398b;
    color: #b4b9ca;
    font-family: Lato, sans-serif;
    font-size: 7px;
    font-weight: 700;
}
.blue.image {
    gap: 4px;
    padding: 0 3px;
}
.panel-tools label {
    display: flex;
    align-items: center;
    gap: 4px;
    margin-left: 4px;
    font-size: 7px;
}
.panel-tools input {
    appearance: none;
    width: 8px;
    height: 8px;
    border: 1px solid #999;
    border-radius: 1px;
}
.entries {
    flex: 1;
    margin: 0 8px 0 7px;
    padding: 5px;
    border: 1px solid #4a4a46;
    border-radius: 2px;
    resize: none;
    overflow: hidden;
    font-family: Lato, sans-serif;
    font-size: 8px;
    line-height: 12px;
    color: #b0b0b0;
}
.panel-add {
    position: relative;
    display: flex;
    padding: 8px 7px;
}
.panel-add .blue {
    height: 20px;
    font-size: 8px;
    border-radius: 3px 0 0 3px;
    padding: 0 3px;
}
.panel-add .blue.split {
    border-left: 1px solid #12225a;
    border-radius: 0 3px 3px 0;
}
.beta {
    position: absolute;
    left: 6px;
    top: 5px;
    padding: 0 2px;
    border-radius: 3px;
    background: #93731a;
    color: #231b05;
    font-size: 7px;
    line-height: 7px;
}
.panel-foot {
    display: flex;
    align-items: center;
    justify-content: space-between;
    height: 20px;
    padding: 0 4px;
    border-top: 1px solid #333;
}
.panel-foot a {
    color: #243a85;
    text-decoration: underline;
}

/* winner dialog */
.dialog {
    position: absolute;
    left: 50%;
    top: 240px;
    width: 320px;
    transform: translateX(-50%);
    border-radius: 4px;
    overflow: hidden;
    background: #1d1d1d;
    border-bottom: 1px solid #4b4b4b;
    color: #fff;
}
.dialog-bar {
    height: 33px;
    background: #3664e0;
}
.dialog-text {
    padding: 7px 0 8px;
    font-family: "Open Sans", sans-serif;
    font-size: 22px;
    line-height: 26px;
    text-align: center;
}
.dialog-buttons {
    display: flex;
    justify-content: flex-end;
    gap: 10px;
    padding: 3px 4px 4px;
    font-weight: 500;
}
.dialog-buttons .remove {
    height: 21px;
    padding: 0 4px;
    border-radius: 3px;
    background: #3664e0;
}

/* taskbar */
.taskbar {
    display: flex;
    align-items: center;
    flex: none;
    height: 24px;
    background: #1b2820;
    border-top: 1px solid #2c3a31;
    color: #dfe3e0;
}
.apps-row {
    display: flex;
    align-items: center;
    margin-left: 199px;
}
.apps-row button {
    position: relative;
    width: 22px;
    height: 22px;
}
.apps-row button svg {
    width: 12px;
    height: 12px;
}
.apps-row .over {
    position: absolute;
}
.apps-row button .mini {
    position: absolute;
    right: 3px;
    top: 3px;
    width: 7px;
    height: 7px;
}
.apps-row .run::after {
    content: "";
    position: absolute;
    left: 9px;
    bottom: 0;
    width: 4px;
    height: 1px;
    background: #9aa19c;
}
.apps-row .current {
    background: #2b3a32;
    border-radius: 3px;
}
.apps-row .current::after {
    left: 7px;
    width: 8px;
}
.search {
    display: flex;
    align-items: center;
    gap: 4px;
    width: 110px;
    height: 17px;
    margin: 0 1px;
    padding: 0 2px 0 6px;
    border-radius: 9px;
    background: #36433b;
    font-family: Lato, sans-serif;
}
.search input {
    flex: 1;
    width: 0;
}
.search input::placeholder {
    color: #cdd2ce;
}
.search .art {
    width: 25px;
    height: 13px;
}
.tray {
    display: flex;
    align-items: center;
    gap: 8px;
    margin-left: auto;
    padding-right: 8px;
}
.lang {
    font-size: 9px;
    padding: 0 4px;
}
.clock {
    display: flex;
    flex-direction: column;
    font-family: "DejaVu Sans", sans-serif;
    font-size: 6px;
    line-height: 8px;
    white-space: nowrap;
}

/* notepad window */
.notepad {
    position: absolute;
    left: 155px;
    top: 141px;
    width: 423px;
    height: 510px;
    display: flex;
    flex-direction: column;
    border-radius: 4px 4px 0 0;
    overflow: hidden;
    background: #fff;
    color: #222;
    font-family: "Open Sans", sans-serif;
    font-size: 6px;
}
.np-title {
    display: flex;
    align-items: center;
    height: 15px;
    padding: 0 7px 0 5px;
    gap: 15px;
    background: #f0f2f8;
}
.np-title span {
    flex: 1;
    margin-left: -11px;
}
.np-title svg {
    color: #555;
}
.np-menu {
    display: flex;
    gap: 8px;
    height: 10px;
    padding: 0 4px;
}
.np-notice {
    display: flex;
    align-items: center;
    height: 14px;
    padding: 0 5px 0 4px;
    gap: 5px;
    background: #feffe0;
}
.install {
    height: 11px;
    padding: 0 4px;
    border: 1px solid #c2c5cc;
    background: #fff;
}
.dismiss {
    margin-left: auto;
}
.dismiss svg {
    width: 6px;
}
.np-body {
    flex: 1;
    display: flex;
    position: relative;
    min-height: 0;
}
.np-body textarea {
    flex: 1;
    padding: 20px 0 0 9px;
    resize: none;
    overflow: hidden;
    white-space: pre;
    font-family: "DejaVu Sans Mono", monospace;
    font-size: 29px;
    line-height: 75px;
    color: #0c0c0c;
}
.caret {
    position: absolute;
    left: 236px;
    top: 188px;
    width: 1px;
    height: 35px;
    background: #000;
}
.np-scroll {
    width: 7px;
    background: #f0f0f0;
}
.np-scroll i {
    display: block;
    width: 2px;
    height: 380px;
    margin: 40px 0 0 3px;
    background: #b9b9b9;
}
.np-status {
    display: flex;
    align-items: center;
    justify-content: flex-end;
    height: 12px;
    background: #f0f0f0;
    padding-right: 9px;
}
.np-status span {
    padding-left: 4px;
    border-left: 1px solid #dcdcdc;
    white-space: nowrap;
}
.np-status .pos {
    width: 70px;
}
.np-status .zoom {
    width: 25px;
}
.np-status .eol {
    width: 60px;
}
.np-status .enc {
    width: 52px;
}

/* stream chat */
.chat {
    position: absolute;
    left: 8px;
    top: 414px;
    font-family: "Liberation Sans", "DejaVu Sans", sans-serif;
    font-size: 17px;
    line-height: 29px;
    color: #fff;
}
.chat p {
    display: flex;
    align-items: center;
    gap: 4px;
    margin: 0;
    white-space: nowrap;
}
.chat svg {
    width: 19px;
    height: 19px;
    margin-top: 4px;
}
.chat b {
    margin-right: 3px;
}
.chat span {
    font-size: 15px;
}
.gold {
    color: #e6b567;
}
.mint {
    color: #37d6a0;
}
.sparkles {
    position: absolute;
    inset: 0;
    width: 100%;
    height: 100%;
    pointer-events: none;
}
```
